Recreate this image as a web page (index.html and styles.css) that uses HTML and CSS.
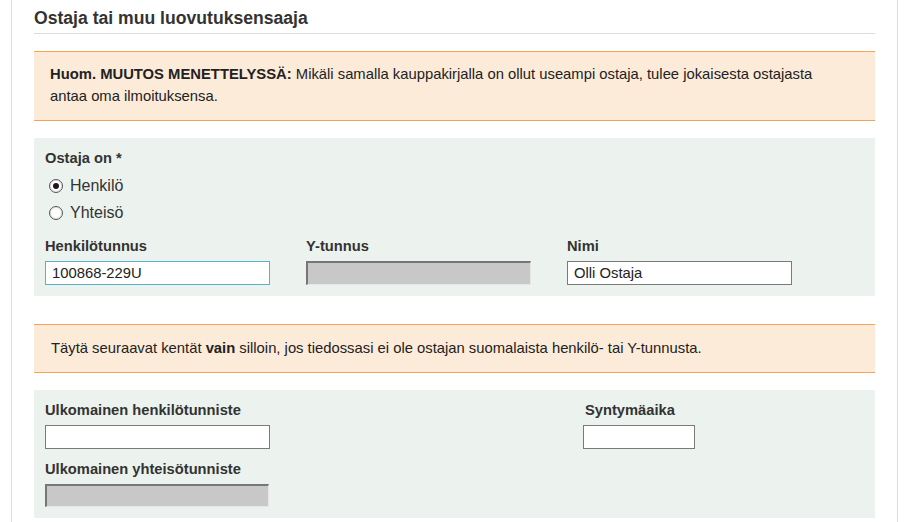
FILE: index.html
```html
<!DOCTYPE html>
<html lang="fi">
<head>
<meta charset="utf-8">
<link rel="stylesheet" href="styles.css">
</head>
<body>
<div class="page">
  <h2 class="section-title">Ostaja tai muu luovutuksensaaja</h2>

  <div class="notice notice-first">
    <strong>Huom. MUUTOS MENETTELYSSÄ:</strong> Mikäli samalla kauppakirjalla on ollut useampi ostaja, tulee jokaisesta ostajasta antaa oma ilmoituksensa.
  </div>

  <div class="panel panel-main">
    <div class="label">Ostaja on *</div>
    <div class="radio-row"><span class="radio checked"></span><span class="radio-text">Henkilö</span></div>
    <div class="radio-row"><span class="radio"></span><span class="radio-text">Yhteisö</span></div>
    <div class="fields">
      <div class="field">
        <div class="label">Henkilötunnus</div>
        <div class="input focused">100868-229U</div>
      </div>
      <div class="field">
        <div class="label">Y-tunnus</div>
        <div class="input disabled"></div>
      </div>
      <div class="field">
        <div class="label">Nimi</div>
        <div class="input">Olli Ostaja</div>
      </div>
    </div>
  </div>

  <div class="notice notice-second">
    Täytä seuraavat kentät <strong>vain</strong> silloin, jos tiedossasi ei ole ostajan suomalaista henkilö- tai Y-tunnusta.
  </div>

  <div class="panel panel-foreign">
    <div class="foreign-grid">
      <div class="field">
        <div class="label">Ulkomainen henkilötunniste</div>
        <div class="input"></div>
      </div>
      <div class="field field-date">
        <div class="label label-date">Syntymäaika</div>
        <div class="input input-date"></div>
      </div>
      <div class="field field-org">
        <div class="label">Ulkomainen yhteisötunniste</div>
        <div class="input disabled narrow"></div>
      </div>
    </div>
  </div>
</div>
</body>
</html>
```

FILE: styles.css
```css
html, body {
  margin: 0;
  padding: 0;
  background: #ffffff;
}

body {
  font-family: "Liberation Sans", Arial, sans-serif;
  color: #333333;
  font-size: 14.8px;
}

.page {
  margin-left: 11px;
  width: 887px;
  border-left: 1px solid #dddddd;
  border-right: 1px solid #dddddd;
  padding: 8px 22px 10px 22px;
  min-height: 522px;
  box-sizing: border-box;
}

.section-title {
  margin: 0;
  font-size: 17.6px;
  font-weight: bold;
  line-height: 20px;
  color: #333333;
  padding-bottom: 5px;
  border-bottom: 1px solid #d6dfe2;
}

.notice {
  background: #fcebd9;
  border-top: 1px solid #f4a358;
  border-bottom: 1px solid #f4a358;
  line-height: 22px;
  color: #222222;
  padding: 11px 40px 13px 16px;
}

.notice strong {
  font-weight: bold;
}

.notice-first {
  margin-top: 17px;
}

.notice-second {
  margin-top: 28px;
  padding: 12px 16px 13px 17px;
}

.panel {
  background: #ecf2ed;
  margin-top: 17px;
  padding: 10px 11px 11px 11px;
}

.label {
  font-weight: bold;
  font-size: 14.7px;
  line-height: 20px;
  color: #333333;
}

.panel-main > .label {
  margin-bottom: 4px;
}

.radio-row {
  display: flex;
  align-items: center;
  height: 27px;
  padding-left: 4px;
}

.radio {
  width: 12px;
  height: 12px;
  border: 1px solid #555555;
  border-radius: 50%;
  background: #ffffff;
  position: relative;
  margin-right: 7px;
  box-shadow: inset 0 0 0 1px #e4e4e4;
}

.radio.checked::after {
  content: "";
  position: absolute;
  left: 3px;
  top: 3px;
  width: 6px;
  height: 6px;
  border-radius: 50%;
  background: #1a1a1a;
}

.radio-text {
  font-size: 16px;
  color: #333333;
}

.fields {
  display: grid;
  grid-template-columns: 261px 261px 261px;
  margin-top: 10px;
}

.field .label {
  margin-bottom: 5px;
}

.input {
  box-sizing: border-box;
  width: 225px;
  height: 24px;
  border: 1px solid #7a7a7a;
  background: #ffffff;
  font-size: 14.8px;
  line-height: 22px;
  padding: 0 6px;
  color: #222222;
}

.input.focused {
  border-color: #5ab0c8;
}

.input.disabled {
  background: #c8c8c8;
  border-top: 2px solid #767676;
  border-left: 2px solid #767676;
  border-right: 1px solid #e6e6e6;
  border-bottom: 1px solid #e6e6e6;
}

.input.narrow {
  width: 224px;
  height: 23px;
}

.panel-foreign {
  padding-top: 10px;
  padding-bottom: 11px;
}

.foreign-grid {
  display: grid;
  grid-template-columns: 538px 112px;
  row-gap: 10px;
}

.panel-foreign .field .label {
  margin-bottom: 5px;
}

.label-date {
  padding-left: 2px;
}

.input-date {
  width: 112px;
}

.field-org {
  grid-column: 1;
}
```
